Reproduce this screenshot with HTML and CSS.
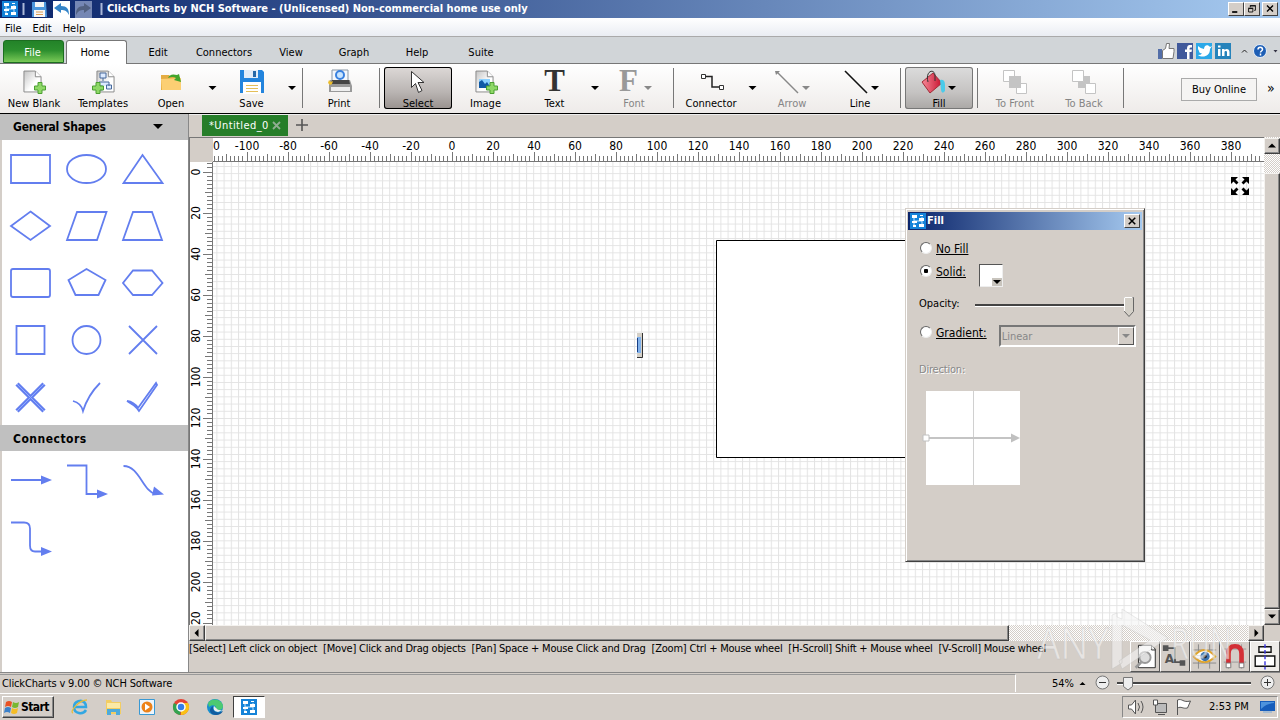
FILE: index.html
```html
<!DOCTYPE html>
<html lang="en">
<head>
  <meta charset="UTF-8">
  <title>ClickCharts by NCH Software</title>
  <link rel="stylesheet" href="styles.css">
</head>
<body>
<svg width="0" height="0" class="defs">
  <defs>
    <symbol id="app" viewBox="0 0 16 16"><path fill="#1583d8" d="M0 0h16v16H0z"/><path d="M4 4v9M12 4v9M4 8h8" stroke="#bfe5ff"/><path fill="#fff" d="M2 2h5v3H2zM9 5h5v3H9zM2 8h5v2H2zM9 11h5v3H9zM3 12h3v2H3zM10 2h3v1h-3z"/></symbol>
    <linearGradient id="paper" x2="1" y2="1"><stop stop-color="#c4c4c4"/><stop offset=".6" stop-color="#fff"/></linearGradient>
    <symbol id="page" viewBox="0 0 20 24"><path d="M1 1h12l6 6v16H1z" fill="url(#paper)" stroke="#888"/><path d="M13 1v6h6" fill="#fff" stroke="#888"/></symbol>
    <symbol id="plus" viewBox="0 0 12 12"><path d="M4 .5h4V4h3.500v4H8v3.500H4V8H.5V4H4z" fill="#8ed866" stroke="#4c9f32"/></symbol>
    <linearGradient id="red" x2="1"><stop stop-color="#f58a98"/><stop offset="1" stop-color="#c8102e"/></linearGradient>
  </defs>
</svg>

<div class="titlebar">
  <svg class="title-icons" viewBox="0 0 106 18">
    <use href="#app" x="2" y="1" width="16" height="16"/>
    <path d="M23.500 3v12M101.500 3v12" stroke="#aab8d8" stroke-width="2"/>
    <path d="M32 2h14l1 15H32z" fill="#4d96dc"/><path d="M35 2h9v5h-9zM34 10h11v7H34z" fill="#f5f5f5"/><path d="M36 12h7M36 14.500h7" stroke="#d99c55"/>
    <path d="M53 1h17v17H53z" fill="#fff"/><path d="M54 8l7-5v3c6 0 8 3 8 9-2-4-4-5-8-5v3z" fill="#3484c8"/>
    <path d="M75 1h17v17H75z" fill="#7587b4"/><path d="M91 8l-7-5v3c-6 0-8 3-8 9 2-4 4-5 8-5v3z" fill="#526181"/>
  </svg>
  <span class="title-text">ClickCharts by NCH Software - (Unlicensed) Non-commercial home use only</span>
  <div class="win-buttons">
    <svg viewBox="0 0 15 14"><path d="M3 10.500h6" stroke="#000" stroke-width="2"/></svg>
    <svg viewBox="0 0 15 14"><path d="M5.500 5V3.500h6v5H10M5 3h7M3.500 6.500h5v4h-5zM3 6h6" fill="none" stroke="#000"/></svg>
    <svg class="close" viewBox="0 0 15 14"><path d="M4 3l7 7M11 3l-7 7" stroke="#000" stroke-width="1.600"/></svg>
  </div>
</div>

<div class="menubar"><span>File</span><span>Edit</span><span>Help</span></div>

<div class="tabs">
  <span class="tab file">File</span>
  <span class="tab home">Home</span>
  <span class="tab w62">Edit</span>
  <span class="tab w70">Connectors</span>
  <span class="tab w64">View</span>
  <span class="tab w62">Graph</span>
  <span class="tab w64">Help</span>
  <span class="tab w64">Suite</span>
  <svg class="social" viewBox="1156 41 124 20">
    <path d="M1158 49h4v10h-4z" fill="#536ea8"/><path d="M1162.500 50.500l3-2 1-5h3l-.5 5h5v3l-1 7h-10.500z" fill="#fff" stroke="#777"/>
    <path d="M1177 43h16v16h-16z" fill="#40599b"/><path d="M1187 59v-7h-2v-2.500h2c0-4 1-5 5-4.500v2.500c-2 0-2.500 0-2.500 2h2.500l-.5 2.500h-2v7z" fill="#fff"/>
    <path d="M1196 43h16v16h-16z" fill="#2ba8e8"/><path d="M1198 46q3 3 6 3c0-4 4-5 6-2l2-1-2 3c0 8-8 9-12 6q3 0 4-1.500c-2 0-3-1-3-2.500q-1.500-2-1-5z" fill="#fff"/>
    <rect x="1215" y="43" width="16" height="16" fill="#2683bb"/><path d="M1218 49h2.500v7h-2.500zM1218 45.500h2.500v2h-2.500zM1222 49h2.500v1c2-2 5-1 5 2v4h-2.500v-4c0-1.500-2.500-1.500-2.500 0v4h-2.500z" fill="#fff"/>
    <path d="M1242 52.500l2.500-2.500 2.500 2.500" fill="none" stroke="#222"/>
    <circle cx="1260" cy="51" r="6.500" fill="#1d5eb5" stroke="#e7f0fa"/><path d="M1258 49.500c0-3 4.500-3 4.500 0 0 1.500-2 1.500-2 3M1260.500 53.500v2" fill="none" stroke="#fff" stroke-width="1.500"/>
    <path d="M1273.500 50h4l-2 2.500z" fill="#334"/>
  </svg>
</div>

<div class="ribbon">
  <div class="btn b68"><svg viewBox="0 67 68 29"><use href="#page" x="23" y="70" width="19" height="23"/><use href="#plus" x="34" y="82" width="12" height="12"/></svg><span>New Blank</span></div>
  <div class="btn b70"><svg viewBox="68 67 70 29"><use href="#page" x="96" y="70" width="19" height="23"/><path d="M100 73h6v5h-6zM103 78v3M99 86v-4h10v4M97.500 86h5v4h-5zM106.500 85h5v4h-5z" fill="#dceaff" stroke="#47699b"/><use href="#plus" x="92" y="82" width="12" height="12"/></svg><span>Templates</span></div>
  <div class="btn b66"><svg viewBox="138 67 66 29"><path d="M161 75h8l2 2h9v13h-19z" fill="#e5ad43"/><path d="M161 79l20-1v12h-19z" fill="#fccf73"/><path d="M168 78q2-5 9-3l2-1 2 8-7-2 2-2q-3-2-8 0z" fill="#42a52c"/></svg><span>Open</span></div>
  <svg class="drop" viewBox="0 0 16 49"><path d="M4.500 22h8l-4 4z"/></svg>
  <div class="btn b63"><svg viewBox="220 67 63 29"><path d="M240 70h22l2 2v21h-24z" fill="#2384dd"/><path d="M244 70h14v8h-14z" fill="#e2ecf8"/><path d="M253 71h3v6h-3z" fill="#2467a8"/><path d="M243 82h18v12h-18z" fill="#fff"/><path d="M246 85.500h12M246 88.500h12M246 91.500h12" stroke="#e5bf59"/></svg><span>Save</span></div>
  <svg class="drop d19" viewBox="0 0 19 49"><path d="M5 22h8l-4 4z"/></svg>
  <i class="sep"></i>
  <div class="btn b72"><svg viewBox="303 67 72 29"><path d="M332 70h16v14h-16z" fill="#f4f7fb" stroke="#8997a5"/><circle cx="340" cy="75" r="4" fill="#c9e5ff" stroke="#3981df" stroke-width="2"/><path d="M330 80h20l2 6v6h-23v-7z" fill="#999"/><path d="M332 80h17l1 4h-19z" fill="#444"/><path d="M331 87h19v4h-19z" fill="#eee"/><path d="M329 80l2 2 2-1-1 3-2 1-2-2z" fill="#edbd29"/></svg><span>Print</span></div>
  <i class="sep s5"></i>
  <div class="btn b68 selected"><svg viewBox="384 67 68 29"><path d="M411.500 71.500v16l4-4 3 9 3.500-2-4-8h6z" fill="#fff" stroke="#333"/></svg><span>Select</span></div>
  <div class="btn b67"><svg viewBox="452 67 67 29"><use href="#page" x="475" y="70" width="19" height="23"/><path d="M479 79h11v9h-11z" fill="#8cd1ff"/><path d="M479 88v-6l3-2 3 4 2-2 4 6z" fill="#105aa5"/><use href="#plus" x="486" y="82" width="12" height="12"/></svg><span>Image</span></div>
  <div class="btn b71"><b class="glyph">T</b><span>Text</span></div>
  <svg class="drop d12" viewBox="0 0 12 49"><path d="M1 22h8l-4 4z"/></svg>
  <div class="btn b64 off"><div class="glyph-row"><b class="glyph">F</b><svg viewBox="0 0 8 29"><path d="M0 19h8l-4 4z" fill="#888"/></svg></div><span>Font</span></div>
  <i class="sep s8"></i>
  <div class="btn b74"><svg viewBox="674 67 74 29"><path d="M703 76.500h9v10.500h9" fill="none" stroke="#222" stroke-width="1.500"/><path d="M701.500 74.500h4v4h-4zM719.500 85.500h4v4h-4z" fill="#fff" stroke="#333"/></svg><span>Connector</span></div>
  <svg class="drop d10" viewBox="0 0 10 49"><path d="M.5 22h8l-4 4z"/></svg>
  <div class="btn b68 off"><svg viewBox="758 67 68 29"><path d="M777 72l21 21" stroke="#888" stroke-width="1.500"/><path d="M775 71h5l-4 4zM802 86h8l-4 4z" fill="#888"/></svg><span>Arrow</span></div>
  <div class="btn b68"><svg viewBox="826 67 68 29"><path d="M845 71l22 22" stroke="#111" stroke-width="1.600"/><path d="M871 86h8l-4 4z"/></svg><span>Line</span></div>
  <i class="sep s6"></i>
  <div class="btn b68 fill"><svg viewBox="905 67 68 29"><path d="M922 82l11-9 9 10-12 10z" fill="url(#red)" stroke="#a12a35"/><path d="M928 82c-3-11 6-14 7-7v6" fill="none" stroke="#333"/><path d="M940 80q5-1 5 5v6q-3 4-4-1z" fill="#4bcbea"/><path d="M948 86h8l-4 4z"/></svg><span>Fill</span></div>
  <i class="sep s4"></i>
  <div class="btn b68 off front"><svg viewBox="981 67 68 29"><path d="M1003.500 70.500h11v11h-11zM1016.500 83.500h10v10h-10z" fill="#fff" stroke="#c4c4c4"/><path d="M1009 76h12v12h-12z" fill="#c4c4c4"/></svg><span>To Front</span></div>
  <div class="btn b70 off"><svg viewBox="1049 67 70 29"><path d="M1078 76h12v12h-12z" fill="#c4c4c4"/><path d="M1072.500 70.500h11v11h-11zM1085.500 83.500h10v10h-10z" fill="#fff" stroke="#c4c4c4"/></svg><span>To Back</span></div>
  <i class="sep s4"></i>
  <span class="buy">Buy Online</span><span class="more">»</span>
</div>

<div class="main">
  <div class="sidebar">
    <div class="side-head">General Shapes<svg viewBox="0 0 10 6"><path d="M0 0h10L5 5z"/></svg></div>
    <svg class="shapes" viewBox="2 140 186 285">
      <path d="M11 155h39v28H11z"/><ellipse cx="86.500" cy="169" rx="19.500" ry="14"/><path d="M142.500 155l20 28h-39z"/>
      <path d="M30.500 211.500L50 226l-19.500 14L11 226zM77 212h29.500L97 240H67zM133 212h19l10 28h-39z"/>
      <rect x="11" y="269" width="39" height="28" rx="2"/><path d="M86.500 269l19 11-7 15h-23l-7-15zM133 270.500h19l10.500 12.500-10.500 12h-19l-10-12z"/>
      <path d="M16.500 326h28v28h-28z"/><circle cx="86.500" cy="340" r="14"/><path d="M129 326l28 28M157 326l-28 28"/>
      <path d="M17 384l27 27M44 384l-27 27" stroke-width="4.500"/><path d="M17 384l27 27M44 384l-27 27" stroke="#8fabff" stroke-width="1"/>
      <path d="M73 401q8 2 10 10 5-16 17-28M127 401q7 1 11 7l18-25 1 2-18 26q-4-6-12-10l11 7"/>
    </svg>
    <div class="side-head wide">Connectors</div>
    <svg class="shapes connectors" viewBox="2 451 186 221">
      <path d="M11 480h31M67 465.500h19.500V494H98M123.500 466c16 0 19 25 32 28M11 522.500h13q6 0 6 6v17q0 6 5 6h8"/>
      <path class="solid" d="M41 475.500l11 4.500-11 4.500zM97 489.500l11 4.500-11 4.500zM154 486.500l10 8-12 1zM41 547l11 4.500-11 4.500z"/>
    </svg>
  </div>

  <div class="work">
    <div class="doc-tabs"><span class="doc-tab">*Untitled_0<svg viewBox="0 0 9 9"><path d="M1 1l7 7M8 1L1 8" stroke="#91ad91" stroke-width="1.800"/></svg></span><svg class="add" viewBox="0 0 12 12"><path d="M6 0v12M0 6h12" stroke="#555" stroke-width="1.600"/></svg></div>
    <div class="view">
      <svg class="canvas" id="canvas" viewBox="189 137 1075 488">
        <defs><pattern id="grid" x="223.600" y="166" width="7.200" height="7.200" patternUnits="userSpaceOnUse"><path d="M.5 0v7.200M0 .5h7.200" stroke="#e3e3e3" stroke-width="1"/></pattern></defs>
        <path d="M189 137h1075v488H189z" fill="#fff"/>
        <path d="M213 162h1051v463H213z" fill="url(#grid)"/>
        <path d="M189 137h24v25h-24z" fill="#d4cec8"/>
        <path d="M716.500 240.500h330v217h-330z" fill="#fff" stroke="#000"/>
        <path d="M189 137.500h1075" stroke="#777"/><path d="M189.500 137v488M212.500 162v463M213 161.500h1051" stroke="#777"/>
        <g id="ruler"></g>
        <path d="M637 333h6v25h-6z" fill="#d4d0c8"/><path d="M637 337h4v16h-4z" fill="#82b2eb"/><path d="M637.500 338v14" stroke="#183f86"/><path d="M642.500 333v24.500H637" fill="none" stroke="#333"/>
        <path d="M1231 177h7l-2.500 2.500 3 3-2 2-3-3-2.500 2.500zM1249 177h-7l2.500 2.500-3 3 2 2 3-3 2.500 2.500zM1231 195h7l-2.500-2.500 3-3-2-2-3 3-2.500-2.500zM1249 195h-7l2.500-2.500-3-3 2-2 3 3 2.500-2.500z"/>
      </svg>
      <div class="vscroll"><div class="sb"><svg viewBox="0 0 8 5"><path d="M4 0l4 4H0z"/></svg></div><div class="thumb"></div><div class="sb"><svg viewBox="0 0 8 5"><path d="M0 0h8L4 4z"/></svg></div></div>
    </div>
    <div class="hscroll"><div class="sb"><svg viewBox="0 0 5 8"><path d="M4 0v8L0 4z"/></svg></div><div class="thumb"></div><div class="track"></div><div class="sb"><svg viewBox="0 0 5 8"><path d="M1 0l4 4-4 4z"/></svg></div><div class="corner"></div></div>
    <div class="hints">
      <span class="hint-text">[Select] Left click on object&nbsp; [Move] Click and Drag objects&nbsp; [Pan] Space + Mouse Click and Drag&nbsp; [Zoom] Ctrl + Mouse wheel&nbsp; [H-Scroll] Shift + Mouse wheel&nbsp; [V-Scroll] Mouse wheel</span>
      <div class="tools">
        <div><svg viewBox="0 0 30 30"><path d="M8 3h14l4 4v20H8z" fill="#fff" stroke="#222"/><path d="M22 3v5h4" fill="none" stroke="#222"/><circle cx="15" cy="16" r="6" fill="#ddd" stroke="#999" stroke-width="2"/><path d="M11 21l-6 6" stroke="#999" stroke-width="3"/></svg></div>
        <div><svg viewBox="0 0 30 30"><path d="M5 6h10v15h7" fill="none" stroke="#555" stroke-width="2"/><path d="M2 3h6v6H2zM20 19h6v6h-6z" fill="#555"/><text x="4" y="22" class="tool-a">A</text></svg></div>
        <div><svg viewBox="0 0 30 30"><path d="M8 2v26M20 2v26M2 8h25M2 22h25" stroke="#888"/><path d="M3 15q11-14 23 0-12 12-23 0z" fill="#fff" stroke="#e1a52b" stroke-width="2"/><circle cx="15" cy="15" r="5" fill="#3c73ae"/><circle cx="15" cy="15" r="2" fill="#123"/></svg></div>
        <div><svg viewBox="0 0 30 30"><path d="M3 7h24M3 21h24M8 2v26M22 2v26" stroke="#999"/><path d="M8 26V12q0-8 7-8t7 8v14" fill="none" stroke="#d32f36" stroke-width="5"/><path d="M5.500 22h5v5h-5zM19.500 22h5v5h-5z" fill="#fff" stroke="#777"/></svg></div>
        <div class="last"><svg viewBox="0 0 30 30"><path d="M8.500 4.500h13v6h-13zM4.500 14.500h21v11h-21z" fill="#fff" stroke="#111" stroke-width="1.500"/><path d="M15 2v27" stroke="#3a35e0" stroke-dasharray="4 2" stroke-width="1.500"/></svg></div>
      </div>
    </div>
  </div>
</div>

<div class="status">
  <span class="version">ClickCharts v 9.00 © NCH Software</span>
  <span class="zoom">54%</span>
  <svg viewBox="1075 674 205 18"><path d="M1079.500 685h6l-3-3z"/><path d="M1117 683h134" stroke="#444" stroke-width="2"/><path d="M1117 684.500h134" stroke="#fff"/><g fill="#eee" stroke="#777"><circle cx="1102.500" cy="682.500" r="6.500"/><circle cx="1267.500" cy="682.500" r="6.500"/><path d="M1123.500 677.500h9v9l-4.500 3.500-4.500-3.500z"/></g><path d="M1099 682.500h7M1264 682.500h7M1267.500 679v7" stroke="#333"/></svg>
</div>

<div class="taskbar">
  <div class="start"><svg viewBox="0 0 16 16"><path d="M2 3q3-2 6 0L7 8Q4 6 1 8z" fill="#e95225"/><path d="M9 3q3 2 6 0l-1 5q-3 2-6 0z" fill="#78b832"/><path d="M1 9q3-2 6 0l-1 5q-3-2-6 0z" fill="#3c81ca"/><path d="M8 9q3 2 6 0l-1 5q-3 2-6 0z" fill="#f5bd25"/></svg>Start</div>
  <svg class="quick" viewBox="60 695 172 25">
    <path d="M85 703c-3-4-11-2-11 4 0 7 9 8 12 3M74 707h12q0-6-6-6" fill="none" stroke="#32a7e2" stroke-width="2.500"/><path d="M73 713c-4-1 6-13 14-13" fill="none" stroke="#e7bd3b" stroke-width="1.300"/>
    <path d="M106 700h5l1 2h9v12h-15z" fill="#f2cd63"/><path d="M107 703h13v5h-13z" fill="#fbe9a5"/><path d="M107 715v-6h13v6h-4v-3h-5v3z" fill="#4daadb"/>
    <path d="M139.500 699.500h15v15h-15z" fill="#eef5fb" stroke="#3999d4"/><circle cx="147" cy="707" r="5.500" fill="#ed8218"/><path d="M145 703.500l5 3.500-5 3.500z" fill="#fff"/>
    <circle cx="181" cy="707" r="8" fill="#e54335"/><path d="M181 707l-7-4a8 8 0 0 0 6 12z" fill="#32a350"/><path d="M181 707v8a8 8 0 0 0 7-12h-7z" fill="#fbc116"/><circle cx="181" cy="707" r="4" fill="#347eea" stroke="#fff" stroke-width="1.500"/>
    <circle cx="215" cy="707" r="8" fill="#168fcf"/><path d="M208 703c4-6 14-4 15 3 0 4-4 5-7 3 1-4-4-5-7-2z" fill="#4dca72"/><path d="M223 711c-5 3-11 1-10-5-6 4-2 9 3 9q5 0 7-4z" fill="#125c9f"/><path d="M214 706q-2 5 4 6l5-2q-5 1-7-2z" fill="#eee"/>
  </svg>
  <div class="active-app"><svg><use href="#app"/></svg></div>
  <div class="tray">
    <svg viewBox="1124 697 75 20"><g fill="#fff" stroke="#555"><path d="M1129.500 705h3l4-5v14l-4-5h-3z"/><path d="M1139 703q3 4 0 8M1142 701q4 6 0 12" fill="none"/><path d="M1156.500 703.500h11v9h-11z" fill="#bbb"/><path d="M1154.500 700h4v5h-4zM1156.500 705v6M1159 714.500h7"/><path d="M1178.500 715v-15c5-2 5 3 13 1l-3 7c-5 1-6-2-10 0"/></g></svg>
    <span>2:53 PM</span>
    <svg class="screen" viewBox="0 0 17 16"><path d="M1 2h15v10H1z" fill="#175dbb"/><path d="M2 10q6-6 13-6V3H2z" fill="#4e93dd"/><path d="M4 13h9" stroke="#7caad8"/></svg>
  </div>
</div>

<div class="dialog">
  <div class="dialog-title"><svg><use href="#app"/></svg><b>Fill</b><div class="win-x"><svg viewBox="0 0 15 14"><path d="M4 3l7 7M11 3l-7 7" stroke="#000" stroke-width="1.600"/></svg></div></div>
  <div class="dialog-body">
    <div class="row r1"><i class="radio"></i><u>No Fill</u></div>
    <div class="row r2"><i class="radio on"></i><u>Solid:</u><div class="swatch"><svg viewBox="0 0 10 8"><path fill="#c8c4bd" d="M0 0h10v8H0z"/><path d="M1 2h8L5 6z"/></svg></div></div>
    <div class="row r3"><span>Opacity:</span><svg class="slider" viewBox="970 293 166 24"><path d="M975 304h150" stroke="#444" stroke-width="2"/><path d="M975 305.500h150" stroke="#fff"/><path d="M1124.500 296.500h9v14l-4.500 5-4.500-5z" fill="#d4d0c8" stroke="#666"/><path d="M1124.500 310v-13.500h8" fill="none" stroke="#fff"/></svg></div>
    <div class="row r4"><i class="radio"></i><u>Gradient:</u><div class="combo"><span>Linear</span><div><svg viewBox="0 0 8 5"><path d="M0 0h8L4 4z" fill="#888"/></svg></div></div></div>
    <div class="direction">Direction:</div>
    <svg class="grad" viewBox="920 389 102 97"><path d="M926 390h94v94h-94z" fill="#fff"/><path d="M973.500 390v94" stroke="#d0d0d0"/><path d="M926 437h90" stroke="#c4c4c4" stroke-width="2"/><path d="M1011 432.500l9 4.500-9 4.500z" fill="#c0c0c0"/><path d="M923 434h6v6h-6z" fill="#fff" stroke="#c0c0c0"/></svg>
  </div>
</div>

<svg class="watermark" viewBox="1030 600 210 75">
  <text x="1037" y="659" textLength="72" lengthAdjust="spacingAndGlyphs">ANY</text><text x="1171" y="659" textLength="61" lengthAdjust="spacingAndGlyphs">RUN</text>
  <path d="M1112 615v54l10-6v-38l28 15-31 21 3 8 46-31-46-29v10l-5-2v-4z"/>
</svg>

<script>
  // ruler ticks and numbers: one unit is 2.05px, a tick every 2 units
  const x0 = 452, y0 = 172, unit = 2.05;
  let ticks = '', labels = '';
  for (let n = -116; n <= 394; n += 2) {
    const x = Math.floor(x0 + n * unit) + .5;
    const len = n % 20 === 0 ? 9 : n % 10 === 0 ? 7 : 5;
    ticks += `M${x} 161v-${len}`;
    if (n % 20 === 0 && n >= -100) labels += `<text x="${x0 + n * unit}" y="150" text-anchor="middle">${n}</text>`;
  }
  for (let n = -4; n <= 220; n += 2) {
    const y = Math.floor(y0 + n * unit) + .5;
    const len = n % 20 === 0 ? 9 : n % 10 === 0 ? 7 : 5;
    ticks += `M212 ${y}h-${len}`;
    if (n % 20 === 0 && n >= 0 && n < 220) labels += `<text transform="translate(200 ${y0 + n * unit}) rotate(-90)" text-anchor="middle">${n}</text>`;
  }
  labels += '<text x="213" y="150">0</text><text transform="translate(200 625) rotate(-90)">20</text>';
  document.getElementById('ruler').innerHTML = `<path d="${ticks}" stroke="#777"/>${labels}`;
</script>
</body>
</html>
```
FILE: styles.css
```css
* {
  box-sizing: border-box;
}
body {
  margin: 0;
  width: 1280px;
  height: 720px;
  overflow: hidden;
  background: #d4cec8;
  color: #000;
  font: 11px/14px Tahoma, "DejaVu Sans Condensed", "DejaVu Sans", sans-serif;
  white-space: nowrap;
}
svg {
  display: block;
  flex: none;
}
.defs {
  position: absolute;
}
.titlebar {
  height: 18px;
  display: flex;
  background: linear-gradient(90deg, #0a246a, #a6caf0);
  color: #fff;
}
.title-icons {
  width: 106px;
  height: 18px;
}
.title-text {
  font-weight: bold;
  line-height: 18px;
  margin-left: 1px;
}
.win-buttons {
  display: flex;
  margin: 2px 2px 0 auto;
}
.win-buttons svg, .win-x {
  width: 16px;
  height: 14px;
  background: #d4cec8;
  border: 1px solid;
  border-color: #fff #404040 #404040 #fff;
}
.win-buttons .close {
  margin-left: 2px;
}
.menubar {
  height: 19px;
  display: flex;
  gap: 11px;
  padding: 4px 5px 0;
  background: linear-gradient(#fff, #eaedf3);
  border-bottom: 1px solid #aaa;
}
.tabs {
  height: 27px;
  display: flex;
  padding: 3px 0 0 3px;
  background: #d1d5d8;
  border-bottom: 1px solid #777;
}
.tab {
  height: 24px;
  text-align: center;
  line-height: 25px;
}
.file {
  width: 61px;
  height: 23px;
  color: #fff;
  border: 1px solid #1c6e20;
  border-radius: 3px 3px 0 0;
  background: linear-gradient(#238329, #2c8f2e 45%, #79c957);
  line-height: 23px;
  text-indent: -2px;
}
.home {
  width: 61px;
  margin-left: 2px;
  background: #fff;
  border: 1px solid #777;
  border-bottom: 0;
  border-radius: 3px 3px 0 0;
  line-height: 23px;
  text-indent: -3px;
}
.w64 { width: 64px; }
.w70 { width: 70px; }
.w62 { width: 62px; }
.social {
  width: 124px;
  height: 20px;
  margin: 1px 0 0 auto;
}
.ribbon {
  height: 50px;
  display: flex;
  background: linear-gradient(#fff, #eeebe9);
  border-bottom: 1px solid #000;
}
.btn {
  flex: none;
  height: 42px;
  margin-top: 3px;
  display: flex;
  flex-direction: column;
  text-align: center;
}
.btn > svg {
  width: 100%;
  height: 29px;
}
.btn span {
  height: 13px;
  line-height: 15px;
}
.b63 { width: 63px; }
.b64 { width: 64px; }
.b66 { width: 66px; }
.b67 { width: 67px; }
.b68 { width: 68px; }
.b70 { width: 70px; }
.b71 { width: 71px; }
.b72 { width: 72px; }
.b74 { width: 74px; }
.off {
  color: #858585;
}
.front {
  margin-left: 3px;
}
.selected, .fill {
  border-radius: 3px;
  background: linear-gradient(#ddd9d7, #b9b4b2 60%, #98918e);
  box-shadow: inset 0 0 0 1px #000;
}
.fill {
  background: linear-gradient(#dcdcdc, #c5c3c2 60%, #aaa7a5);
  box-shadow: inset 0 0 0 1px #777;
}
.drop {
  width: 16px;
  height: 49px;
}
.d19 { width: 19px; }
.d12 { width: 12px; }
.d10 { width: 10px; }
.sep {
  flex: none;
  width: 1px;
  height: 40px;
  margin: 4px 0 0 0;
  background: #777;
}
.s5 { margin: 4px 4px 0; }
.s6 { margin: 4px 4px 0 6px; }
.s8 { margin-left: 7px; }
.s4 { margin-left: 4px; }
.glyph {
  font: bold 31px/28px "Liberation Serif", serif;
  height: 29px;
  color: #333;
}
.glyph-row {
  display: flex;
  padding-left: 17px;
  gap: 6px;
}
.glyph-row svg {
  width: 8px;
  height: 29px;
}
.off .glyph {
  color: #999;
}
.buy {
  width: 76px;
  height: 23px;
  margin: 14px 0 0 57px;
  border: 1px solid #aaa;
  background: #f5f4f3;
  line-height: 21px;
  text-align: center;
}
.more {
  margin: 17px 0 0 10px;
  font-size: 14px;
}
.main {
  height: 558px;
  display: flex;
}
.sidebar {
  width: 189px;
  background: #fff;
  border-right: 1px solid #888;
  box-shadow: inset 2px 0 #d4cec8;
}
.side-head {
  height: 26px;
  display: flex;
  align-items: center;
  padding: 0 25px 0 13px;
  background: #c0c0c0;
  font-size: 12px;
  font-weight: bold;
  letter-spacing: -.2px;
  justify-content: space-between;
}
.wide {
  letter-spacing: .5px;
  padding-top: 1px;
}
.side-head svg {
  width: 10px;
  height: 6px;
}
.shapes {
  width: 186px;
  height: 285px;
  margin-left: 2px;
  fill: none;
  stroke: #637eef;
  stroke-width: 1.8;
}
.connectors {
  height: 221px;
}
.solid {
  fill: #637eef;
  stroke: none;
}
.work {
  width: 1091px;
}
.doc-tabs {
  height: 23px;
  display: flex;
  border-top: 1px solid #eee;
  padding-left: 13px;
}
.doc-tab {
  width: 86px;
  height: 21px;
  display: flex;
  align-items: center;
  gap: 3px;
  padding-left: 7px;
  background: #267e29;
  color: #fff;
  letter-spacing: .4px;
}
.doc-tab svg {
  width: 9px;
  height: 9px;
}
.add {
  width: 12px;
  height: 12px;
  margin: 4px 0 0 8px;
}
.view {
  height: 488px;
  display: flex;
}
.canvas {
  width: 1075px;
  height: 488px;
}
.canvas text {
  font-size: 12px;
}
.vscroll {
  width: 16px;
  padding-top: 1px;
  display: flex;
  flex-direction: column;
  justify-content: space-between;
}
.vscroll, .track {
  background: repeating-conic-gradient(#fff 0 25%, #d4cec8 0 50%) 0 0 / 2px 2px;
}
.sb, .thumb {
  flex: none;
  width: 16px;
  height: 16px;
  display: flex;
  align-items: center;
  justify-content: center;
  background: #d4cec8;
  border: 1px solid;
  border-color: #f4f2ef #404040 #404040 #f4f2ef;
  box-shadow: inset -1px -1px #888;
}
.sb svg {
  width: 8px;
  height: 8px;
}
.vscroll .thumb {
  height: 436px;
  margin-top: 18px;
}
.hscroll {
  height: 16px;
  display: flex;
}
.hscroll .thumb {
  width: 804px;
}
.track {
  flex: 1;
}
.corner {
  width: 16px;
}
.hints {
  height: 31px;
  display: flex;
  justify-content: space-between;
}
.hint-text {
  width: 0;
  padding-top: 1px;
  letter-spacing: -.21px;
}
.tools {
  display: flex;
}
.tools div {
  width: 30px;
  height: 31px;
  border: 1px solid;
  border-color: #fff #555 #555 #fff;
}
.tools .last {
  background: #eeece9;
}
.tools svg {
  width: 28px;
  height: 29px;
}
.tool-a {
  font: bold 13px "DejaVu Sans", sans-serif;
  fill: #555;
}
.status {
  height: 22px;
  display: flex;
  align-items: center;
  border-top: 1px solid #888;
  border-bottom: 1px solid #fff;
}
.version {
  width: 1016px;
  height: 18px;
  padding: 2px 0 0 2px;
  border-right: 1px solid #fff;
  border-top: 1px solid #999;
  letter-spacing: -.14px;
}
.zoom {
  width: 59px;
  padding: 1px 0 0 36px;
}
.status svg {
  width: 205px;
  height: 18px;
}
.taskbar {
  height: 26px;
  padding-top: 1px;
  display: flex;
}
.start {
  width: 52px;
  height: 22px;
  margin: 1px 6px 0 2px;
  display: flex;
  align-items: center;
  gap: 1px;
  border: 1px solid;
  border-color: #fff #404040 #404040 #fff;
  box-shadow: inset -1px -1px #888;
  font-size: 12px;
  font-weight: bold;
  letter-spacing: -.6px;
}
.start svg {
  width: 16px;
  height: 16px;
  margin-left: 1px;
}
.quick {
  width: 172px;
  height: 25px;
}
.active-app {
  width: 32px;
  height: 22px;
  margin: 1px 0 0 1px;
  padding: 2px 7px;
  background: #fff;
  border: 1px solid;
  border-color: #404040 #fff #fff #404040;
}
.active-app svg, .dialog-title > svg {
  width: 16px;
  height: 16px;
}
.tray {
  width: 156px;
  height: 22px;
  display: flex;
  align-items: center;
  margin: 1px 2px 0 auto;
  border: 1px solid;
  border-color: #888 #fff #fff #888;
}
.tray svg {
  width: 75px;
  height: 20px;
}
.tray span {
  width: 50px;
  margin-left: 11px;
}
.tray .screen {
  width: 17px;
  height: 16px;
}
.dialog {
  position: absolute;
  left: 905px;
  top: 208px;
  width: 240px;
  height: 354px;
  padding: 3px 2px 2px;
  background: #d4cec8;
  border: 1px solid;
  border-color: #d4cec8 #404040 #404040 #d4cec8;
  box-shadow: inset 1px 1px #fff, inset -1px -1px #888;
}
.dialog-title {
  height: 18px;
  display: flex;
  align-items: center;
  background: linear-gradient(90deg, #0a246a, #a6caf0);
  color: #fff;
  padding: 0 2px;
}
.dialog-title b {
  margin-left: 1px;
}
.win-x {
  margin-left: auto;
}
.dialog-body {
  padding: 10px 0 0 11px;
}
.row {
  display: flex;
  height: 24px;
  align-items: flex-start;
}
.r1 { padding-top: 2px; }
.r2 { padding-top: 1px; }
.r3 { height: 31px; padding-top: 9px; }
.r4 { height: 36px; padding-top: 7px; }
.row u {
  font-size: 12px;
  line-height: 14px;
  margin-left: 4px;
  text-underline-offset: 1px;
}
.radio {
  width: 12px;
  height: 12px;
  margin-left: 1px;
  border-radius: 50%;
  background: #fff;
  border: 1px solid;
  border-color: #666 #eee #eee #666;
}
.radio.on {
  background: radial-gradient(circle, #000 0 2px, #fff 2.5px);
}
.swatch {
  width: 24px;
  height: 23px;
  margin: -1px 0 0 13px;
  display: flex;
  align-items: flex-end;
  justify-content: flex-end;
  background: #fff;
  border: 1px solid;
  border-color: #555 #eee #eee #555;
}
.swatch svg {
  width: 10px;
  height: 8px;
}
.slider {
  width: 166px;
  height: 24px;
  margin: -3px 0 0 10px;
}
.combo {
  width: 137px;
  height: 22px;
  margin: -1px 0 0 12px;
  display: flex;
  justify-content: space-between;
  color: #888;
  border: 2px solid;
  border-color: #777 #fff #fff #777;
}
.combo span {
  padding: 3px 1px;
}
.combo div {
  width: 16px;
  display: flex;
  align-items: center;
  justify-content: center;
  border: 1px solid;
  border-color: #fff #555 #555 #fff;
}
.combo svg {
  width: 8px;
  height: 5px;
}
.direction {
  margin-top: 8px;
  color: #888;
  text-shadow: 1px 1px #fff;
  letter-spacing: -.2px;
}
.grad {
  width: 102px;
  height: 97px;
  margin: 13px 0 0 1px;
}
.watermark {
  position: absolute;
  left: 1030px;
  top: 600px;
  width: 210px;
  height: 75px;
  opacity: .6;
  fill: #f4f4f4;
  stroke: #bbb;
  stroke-width: .5;
}
.watermark text {
  font: 44px "Open Sans", sans-serif;
}
```
